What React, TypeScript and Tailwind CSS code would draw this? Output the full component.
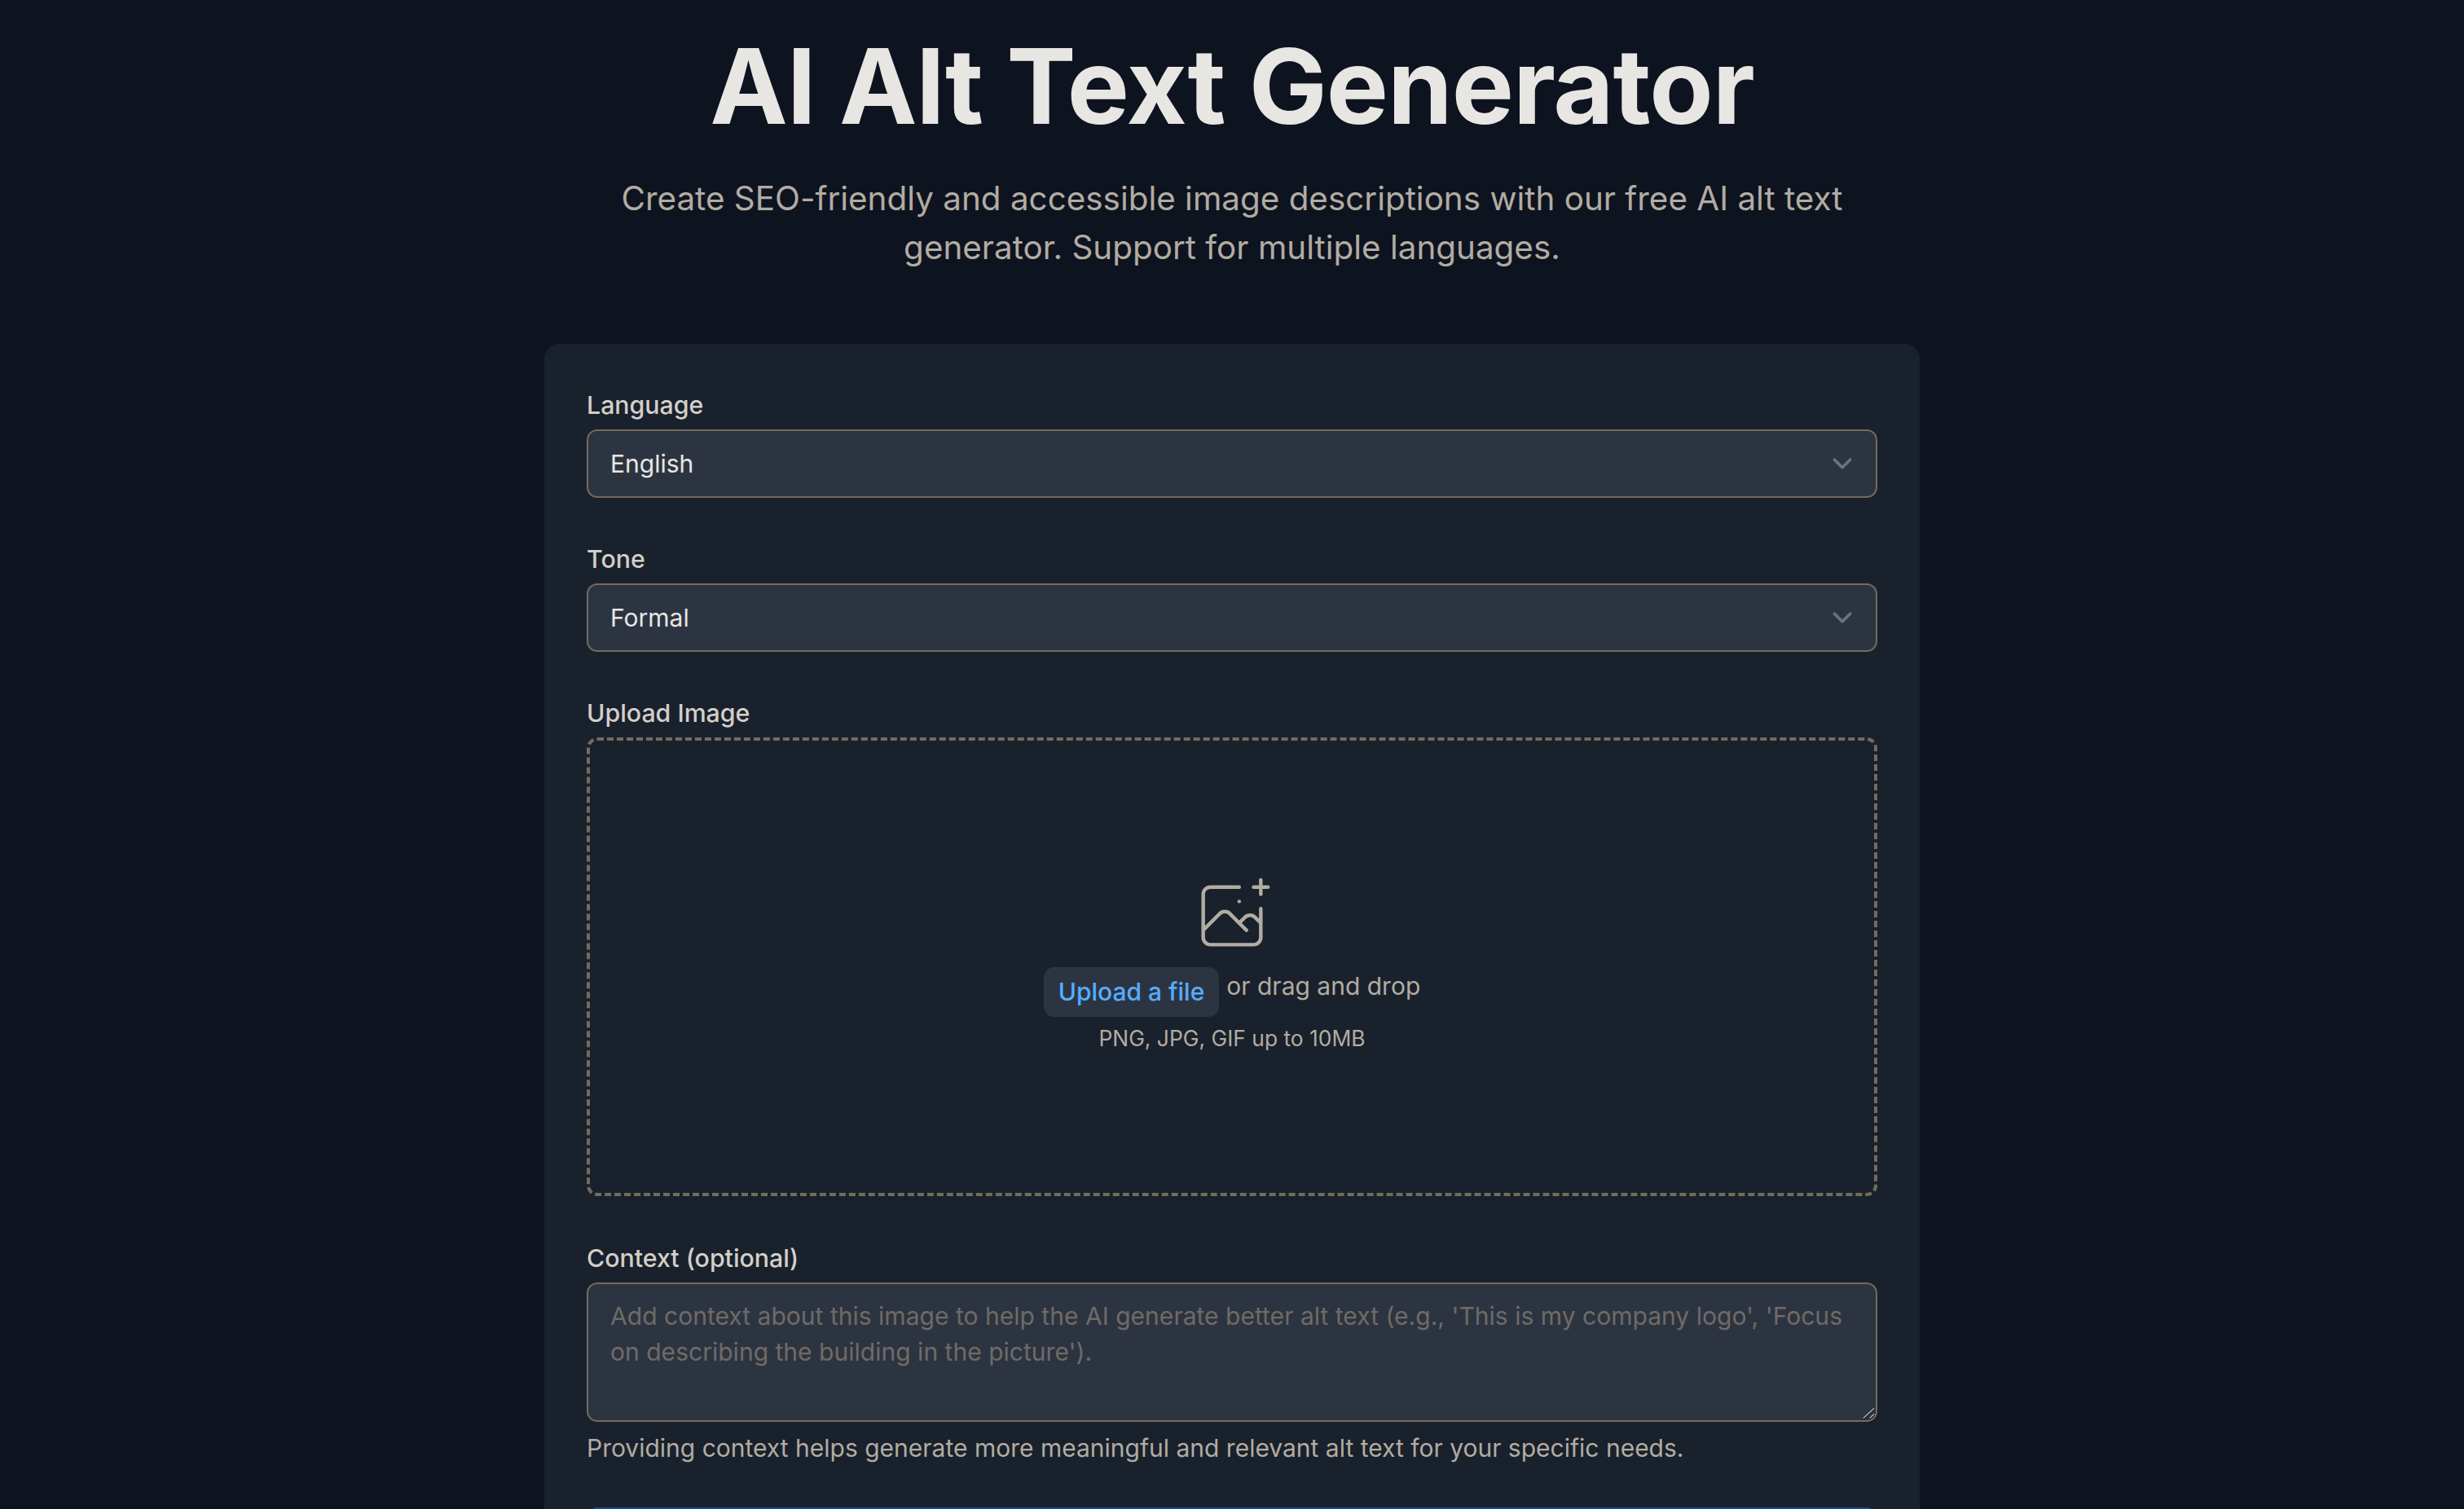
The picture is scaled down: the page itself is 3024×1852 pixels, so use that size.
function Chevron() {
  return (
    <svg
      className="pointer-events-none absolute top-[18px] right-[19px] h-12 w-12"
      viewBox="0 0 20 20"
      fill="none"
      aria-hidden
    >
      <path d="M6 8l4 4 4-4" stroke="#6b7280" strokeWidth="1.5" strokeLinecap="round" strokeLinejoin="round" />
    </svg>
  );
}

function FieldLabel({ children }: { children: string }) {
  return <label className="mb-[10px] block text-[30.3px] leading-[39px] font-medium text-[#d3cfc9]">{children}</label>;
}

function SelectField({ label, value, className }: { label: string; value: string; className?: string }) {
  return (
    <div className={className}>
      <FieldLabel>{label}</FieldLabel>
      <div className="relative">
        <select
          defaultValue={value}
          className="block h-[84px] w-full appearance-none rounded-[13px] border-2 border-[#736b5e] bg-[#2d3441] px-[27px] text-[30px] text-[#e8e6e3] outline-none"
        >
          <option>{value}</option>
        </select>
        <Chevron />
      </div>
    </div>
  );
}

export default function App() {
  return (
    <div className="h-[1852px] overflow-hidden bg-[#0e1320] font-[Inter,sans-serif]">
      <div className="mx-auto w-[1688px] pt-[26px]">
        <header className="text-center">
          <h1 className="text-[128px] leading-[160px] font-[750] tracking-[-1px] text-[#e8e6e3]">
            AI Alt Text Generator
          </h1>
          <p className="mx-auto mt-7 w-[1536px] text-[40.4px] leading-[60px] text-[#b2aca2]">
            Create SEO-friendly and accessible image descriptions with our free AI alt text generator. Support for
            multiple languages.
          </p>
        </header>

        <main className="mt-[88px] rounded-[18px] bg-[#19212c] px-[52px] pt-[56px] pb-12">
          <SelectField label="Language" value="English" />
          <SelectField label="Tone" value="Formal" className="mt-[56px]" />

          <div className="mt-[56px]">
            <FieldLabel>Upload Image</FieldLabel>
            <div className="flex h-[563px] flex-col items-center rounded-[13px] border-4 border-dashed border-[#736b5e] pt-[162px]">
              <svg className="h-[106px] w-[106px] text-[#b2aca2]" viewBox="0 0 48 48" fill="none" stroke="currentColor" aria-hidden>
                <path
                  d="M28 8H12a4 4 0 00-4 4v20m32-12v8m0 0v8a4 4 0 01-4 4H12a4 4 0 01-4-4v-4m32-4l-3.172-3.172a4 4 0 00-5.656 0L28 28M8 32l9.172-9.172a4 4 0 015.656 0L28 28m0 0l4 4m4-24h8m-4-4v8m-12 4h.02"
                  strokeWidth="2"
                  strokeLinecap="round"
                  strokeLinejoin="round"
                />
              </svg>
              <div className="mt-[10px] flex items-start text-[30px] leading-10 text-[#b2aca2]">
                <span className="rounded-[13px] bg-[#2d3441] px-[18px] py-[10px] leading-[41px] font-medium text-[#54aeff]">Upload a file</span>
                <p className="pt-[3px] pl-[9px]">or drag and drop</p>
              </div>
              <p className="mt-[10px] text-[26.4px] leading-8 text-[#b2aca2]">PNG, JPG, GIF up to 10MB</p>
            </div>
          </div>

          <div className="mt-[57px]">
            <FieldLabel>Context (optional)</FieldLabel>
            <div className="relative">
              <textarea
                rows={3}
                placeholder="Add context about this image to help the AI generate better alt text (e.g., 'This is my company logo', 'Focus on describing the building in the picture')."
                className="block h-[171px] w-full resize-none rounded-[13px] border-2 border-[#736b5e] bg-[#2d3441] px-[27px] pt-[17px] pb-4 text-[30.05px] leading-[44px] text-[#e8e6e3] outline-none placeholder:text-[#6f6b66]"
              />
              <svg className="pointer-events-none absolute right-[2px] bottom-[2px] h-4 w-4" viewBox="0 0 16 16" fill="none" aria-hidden>
                <path d="M1.5 14.5 14.5 2.5M9.5 14.5 14.5 9.5" stroke="#14181f" strokeWidth="1.5" />
                <path d="M1 13.5 14 1.5M9 13.5 14 8.5" stroke="#a9b0bb" strokeWidth="1.5" />
              </svg>
            </div>
            <p className="mt-3 text-[30px] leading-10 text-[#b2aca2]">
              Providing context helps generate more meaningful and relevant alt text for your specific needs.
            </p>
          </div>

          {/* only the top edge of this button is on screen; its label is below the fold */}
          <div className="mt-[53px] h-[84px] w-full rounded-[13px] bg-[#0c4a9f]" />
        </main>
      </div>
    </div>
  );
}
